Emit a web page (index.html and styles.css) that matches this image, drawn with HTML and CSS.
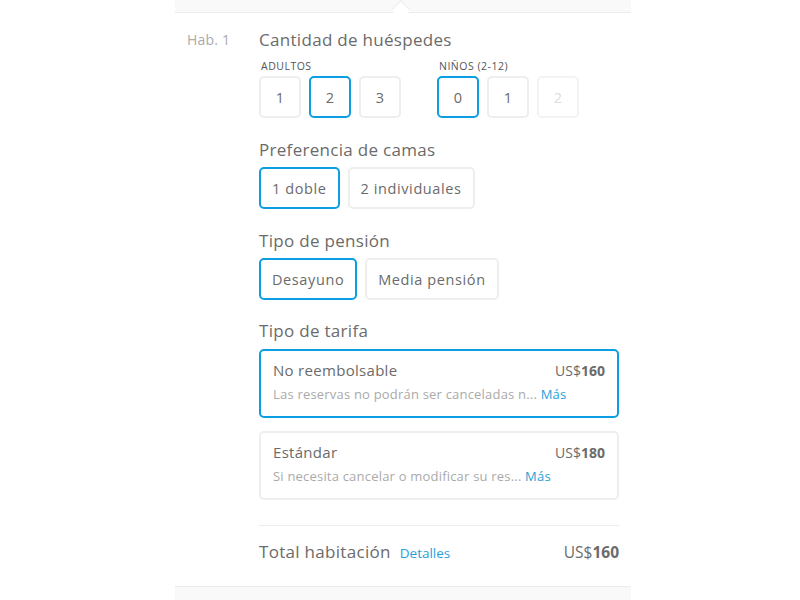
FILE: index.html
```html
<!DOCTYPE html>
<html lang="es">
<head>
<meta charset="utf-8">
<link rel="stylesheet" href="styles.css">
</head>
<body>
<div class="panel">
  <div class="topbar"><span class="notch"></span></div>
  <div class="room">
    <div class="hab">Hab. 1</div>
    <div class="content">
      <div class="section first">
        <div class="title">Cantidad de huéspedes</div>
        <div class="guests">
          <div class="group">
            <div class="label">ADULTOS</div>
            <div class="opts">
              <div class="sq">1</div>
              <div class="sq sel">2</div>
              <div class="sq">3</div>
            </div>
          </div>
          <div class="group">
            <div class="label">NIÑOS (2-12)</div>
            <div class="opts">
              <div class="sq sel">0</div>
              <div class="sq">1</div>
              <div class="sq dis">2</div>
            </div>
          </div>
        </div>
      </div>
      <div class="section">
        <div class="title">Preferencia de camas</div>
        <div class="opts">
          <div class="pill sel">1 doble</div>
          <div class="pill">2 individuales</div>
        </div>
      </div>
      <div class="section">
        <div class="title">Tipo de pensión</div>
        <div class="opts">
          <div class="pill sel">Desayuno</div>
          <div class="pill">Media pensión</div>
        </div>
      </div>
      <div class="section tarifa">
        <div class="title">Tipo de tarifa</div>
        <div class="cards">
          <div class="card sel">
            <div class="row"><span class="name">No reembolsable</span><span class="price">US$<b>160</b></span></div>
            <div class="desc">Las reservas no podrán ser canceladas n... <span class="link">Más</span></div>
          </div>
          <div class="card">
            <div class="row"><span class="name">Estándar</span><span class="price">US$<b>180</b></span></div>
            <div class="desc">Si necesita cancelar o modificar su res... <span class="link">Más</span></div>
          </div>
        </div>
      </div>
      <div class="total">
        <div class="tleft"><span class="tlabel">Total habitación</span><span class="link det">Detalles</span></div>
        <span class="tprice">US$<b>160</b></span>
      </div>
    </div>
  </div>
  <div class="bottombar"></div>
</div>
</body>
</html>
```

FILE: styles.css
```css
html, body {
  margin: 0;
  padding: 0;
  background: #fff;
}
body {
  font-family: "Open Sans", Lato, sans-serif;
  color: #6b6b6b;
}
.panel {
  width: 456px;
  margin-left: 175px;
  height: 600px;
  display: flex;
  flex-direction: column;
}
.topbar {
  height: 12px;
  background: #f9f9f9;
  border-bottom: 1px solid #ececec;
  position: relative;
}
.notch {
  position: absolute;
  left: 219px;
  top: 3px;
  width: 13px;
  height: 13px;
  background: #fff;
  border-left: 1px solid #ececec;
  border-top: 1px solid #ececec;
  transform: rotate(45deg);
}
.room {
  display: flex;
  padding: 17px 12px 0 12px;
  flex: 1;
}
.hab {
  width: 72px;
  font-size: 14px;
  color: #aaa;
  line-height: 20px;
  letter-spacing: 0.2px;
}
.content {
  flex: 1;
  display: flex;
  flex-direction: column;
}
.title {
  font-size: 17px;
  line-height: 20px;
  color: #6b6b6b;
  letter-spacing: 0.3px;
}
.section {
  margin-top: 22px;
}
.section.first {
  margin-top: 0;
}
.section.tarifa {
  margin-top: 21px;
}
.section .title + .opts {
  margin-top: 7px;
}
.section .title + .cards {
  margin-top: 8px;
}
.guests {
  display: flex;
  gap: 36px;
  margin-top: 9px;
}
.label {
  font-size: 10.5px;
  line-height: 14px;
  color: #555;
  padding-left: 2px;
  margin-bottom: 3px;
  letter-spacing: 0.5px;
}
.opts {
  display: flex;
  gap: 8px;
}
.sq, .pill {
  box-sizing: border-box;
  height: 42px;
  border: 2px solid #eeeeee;
  border-radius: 5px;
  display: flex;
  align-items: center;
  justify-content: center;
  font-size: 14.5px;
  color: #6b6b6b;
}
.sq {
  width: 42px;
}
.pill {
  padding: 0 11px;
  letter-spacing: 0.6px;
}
.sel {
  border-color: #0c9ee0;
}
.dis {
  color: #ddd;
  border-color: #f3f3f3;
}
.cards {
  display: flex;
  flex-direction: column;
  gap: 13px;
}
.card {
  box-sizing: border-box;
  height: 69px;
  border: 2px solid #eeeeee;
  border-radius: 5px;
  padding: 9px 12px 0 12px;
}
.card.sel {
  border-color: #0c9ee0;
}
.row {
  display: flex;
  justify-content: space-between;
  align-items: baseline;
  line-height: 20px;
}
.name {
  font-size: 15px;
  color: #6b6b6b;
  letter-spacing: 0.3px;
}
.price {
  font-size: 14px;
  color: #6b6b6b;
}
.price b, .tprice b {
  font-weight: 700;
}
.desc {
  font-size: 13px;
  color: #aaa;
  line-height: 18px;
  margin-top: 4px;
  letter-spacing: 0.2px;
}
.link {
  color: #2a9fd8;
}
.total {
  margin-top: 25px;
  border-top: 1px solid #ececec;
  display: flex;
  justify-content: space-between;
  align-items: baseline;
  padding-top: 14px;
}
.tlabel {
  font-size: 17px;
  color: #6b6b6b;
  letter-spacing: 0.3px;
}
.det {
  font-size: 13.5px;
  margin-left: 9px;
}
.tprice {
  font-size: 15.5px;
  color: #6b6b6b;
}
.bottombar {
  margin-top: auto;
  height: 13px;
  background: #f9f9f9;
  border-top: 1px solid #ececec;
}
```
